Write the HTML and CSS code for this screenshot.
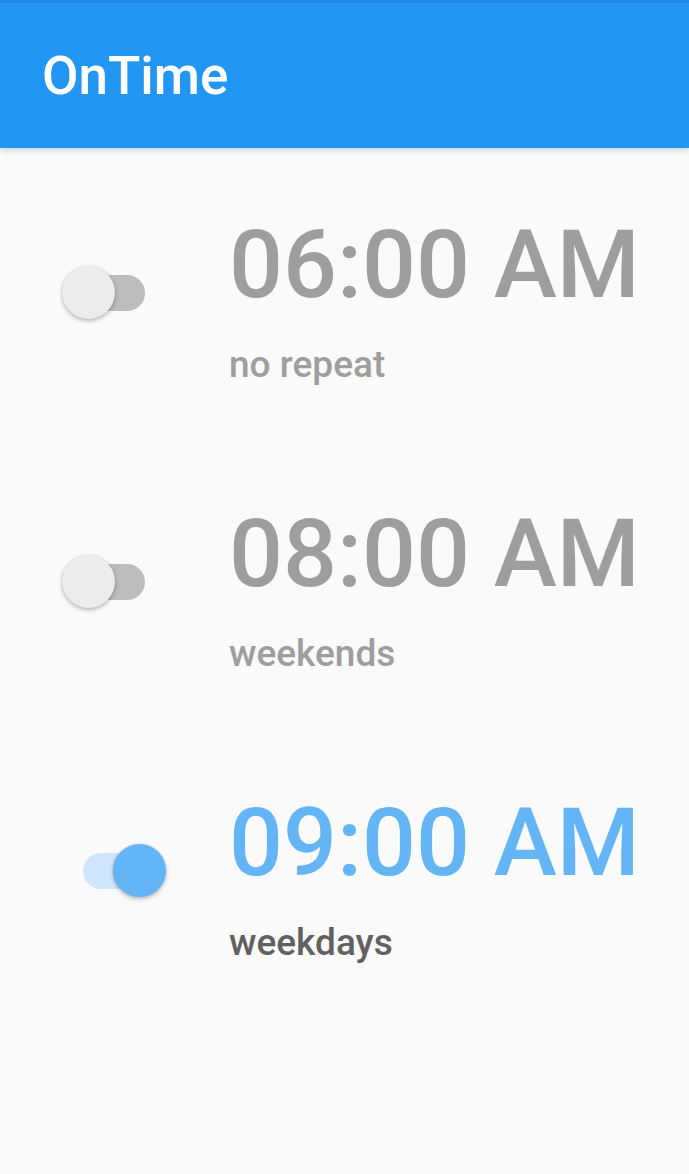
FILE: index.html
```html
<!DOCTYPE html>
<html>
<head>
<meta charset="utf-8">
<link rel="stylesheet" href="styles.css">
</head>
<body>
<header class="appbar"><h1 class="title">OnTime</h1></header>
<main class="list">
  <div class="row">
    <div class="switch-col"><div class="switch"><div class="track"></div><div class="thumb"></div></div></div>
    <div class="info">
      <div class="time">06:00 AM</div>
      <div class="repeat">no repeat</div>
    </div>
  </div>
  <div class="row">
    <div class="switch-col"><div class="switch"><div class="track"></div><div class="thumb"></div></div></div>
    <div class="info">
      <div class="time">08:00 AM</div>
      <div class="repeat">weekends</div>
    </div>
  </div>
  <div class="row on">
    <div class="switch-col"><div class="switch"><div class="track"></div><div class="thumb"></div></div></div>
    <div class="info">
      <div class="time">09:00 AM</div>
      <div class="repeat">weekdays</div>
    </div>
  </div>
</main>
</body>
</html>
```
FILE: styles.css
```css
* { box-sizing: border-box; }
html, body { margin: 0; padding: 0; }
body {
  background: #fafafa;
  font-family: Roboto, "Noto Sans", sans-serif;
  width: 689px;
  height: 1174px;
  overflow: hidden;
}
.appbar {
  height: 148px;
  background: #2196f3;
  border-top: 3px solid #1e88e5;
  display: flex;
  align-items: center;
  padding-left: 42px;
  box-shadow: 0 2px 6px rgba(0,0,0,0.18);
  position: relative;
  z-index: 1;
}
.title {
  margin: 0;
  color: #fff;
  font-size: 53px;
  font-weight: 500;
  line-height: 1;
  margin-top: 2px;
}
.list {
  display: flex;
  flex-direction: column;
  gap: 112px;
  padding-top: 61px;
}
.row {
  display: flex;
  align-items: center;
}
.switch-col {
  width: 229px;
  padding-left: 62px;
  margin-bottom: 11px;
}
.switch {
  position: relative;
  width: 104px;
  height: 53px;
}
.track {
  position: absolute;
  left: 21px;
  top: 9px;
  width: 62px;
  height: 36px;
  border-radius: 18px;
  background: #bdbdbd;
}
.thumb {
  position: absolute;
  left: 0;
  top: 0;
  width: 53px;
  height: 53px;
  border-radius: 50%;
  background: #ececec;
  box-shadow: 0 2px 4px rgba(0,0,0,0.25), 0 0 2px rgba(0,0,0,0.12);
}
.row.on .track { background: #cfe6fb; }
.row.on .thumb { left: 51px; background: #64b5f6; }
.info {
  display: flex;
  flex-direction: column;
  gap: 23px;
}
.time {
  font-size: 95px;
  line-height: 112px;
  color: #9e9e9e;
  font-weight: 500;
  white-space: nowrap;
}
.repeat {
  font-size: 37px;
  line-height: 42px;
  color: #9e9e9e;
  font-weight: 500;
}
.row.on .time { color: #64b5f6; }
.row.on .repeat { color: #616161; }
```
